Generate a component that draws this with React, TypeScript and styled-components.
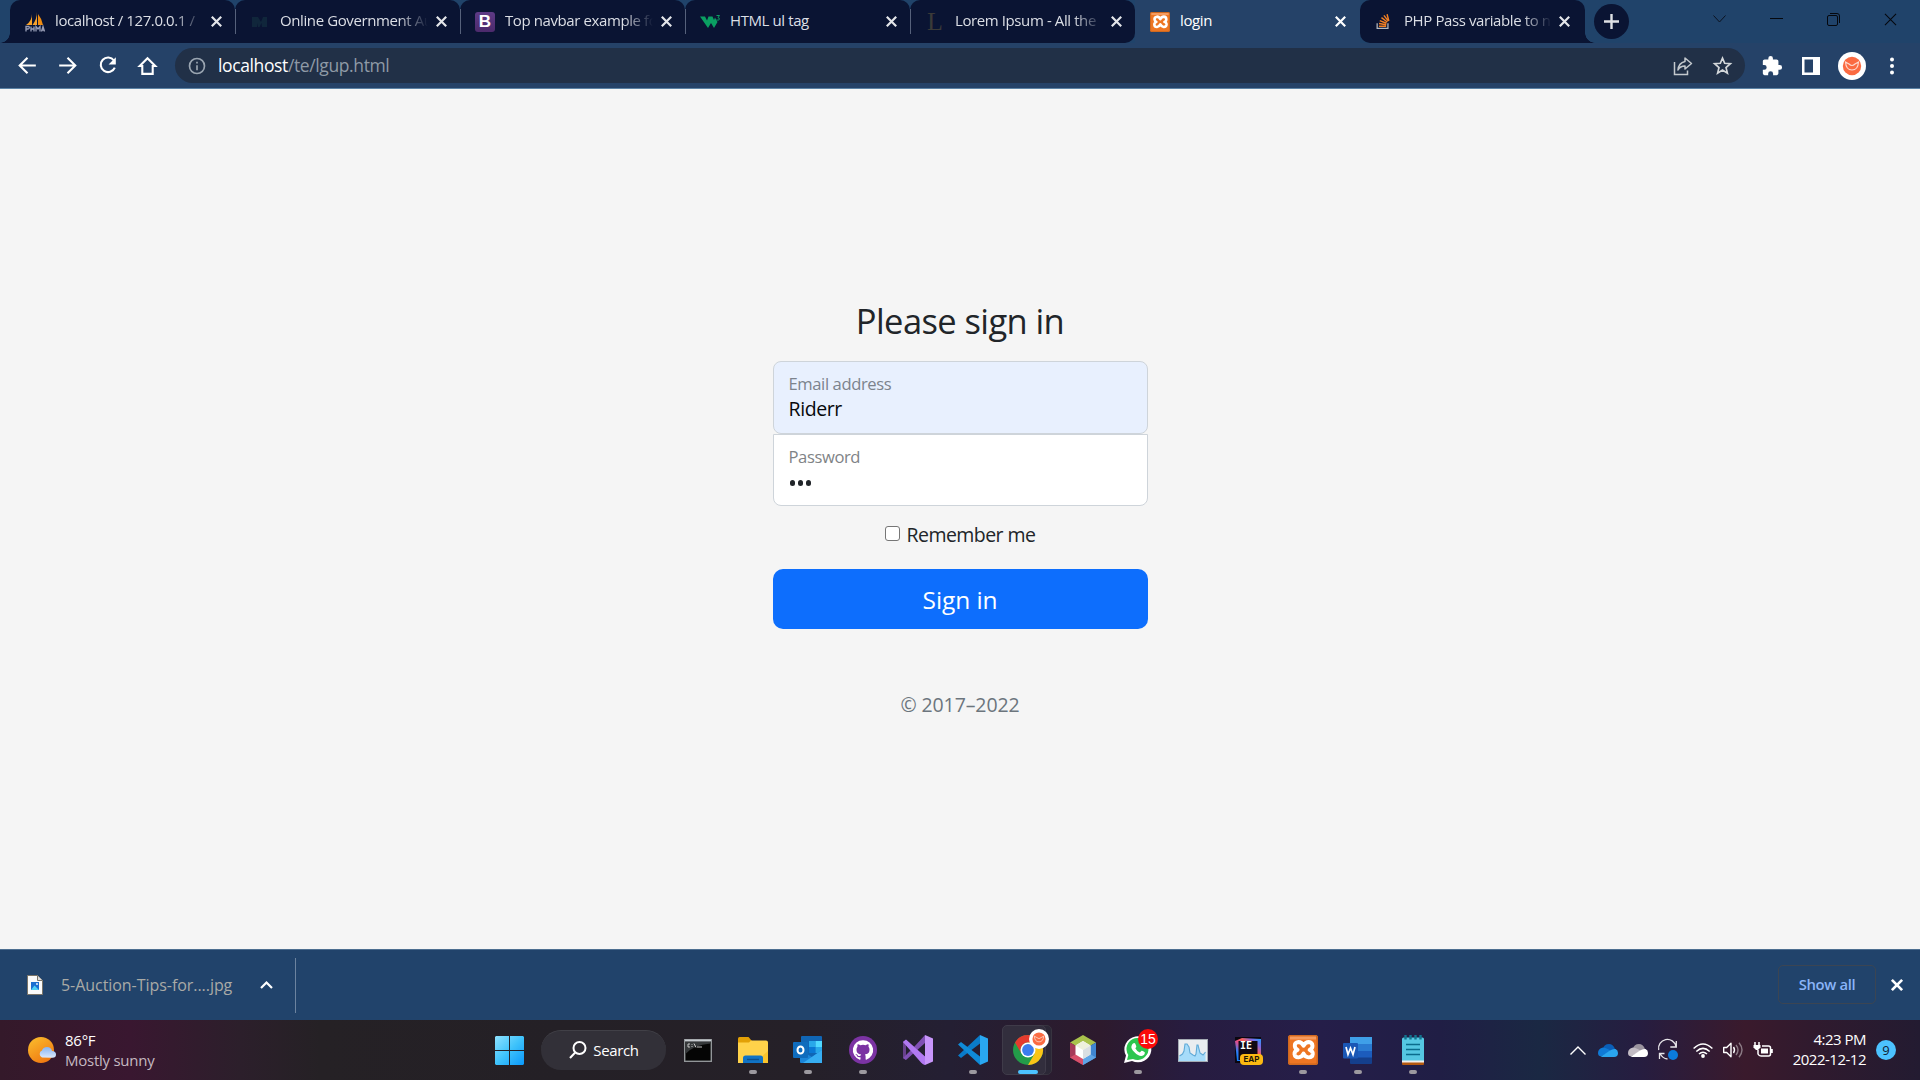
import React from "react";
import styled, { createGlobalStyle } from "styled-components";

const Global = createGlobalStyle`
  * { box-sizing: border-box; }
  html, body { margin: 0; padding: 0; overflow: hidden; }
  body { font-family: "Open Sans", "Noto Sans", sans-serif; }
  svg { display: block; flex: none; overflow: visible; }
`;

/* ---------- window shell ---------- */

const Screen = styled.div`
  width: 1920px;
  height: 1080px;
  display: flex;
  flex-direction: column;
  background: #f5f5f5;
`;

const TabStrip = styled.div`
  height: 43px;
  display: flex;
  align-items: stretch;
  padding: 0 1px 0 10px;
  background: #20436a;
`;

const TabBox = styled.div<{ $active?: boolean; $round?: string; $last?: boolean }>`
  position: relative;
  width: 225px;
  display: flex;
  align-items: center;
  padding: 0 ${(p) => (p.$last ? 15 : p.$active ? 14 : 13)}px 0 ${(p) => (p.$last ? 14 : 15)}px;
  color: ${(p) => (p.$active ? "#ffffff" : "#dcdfe6")};
  background: ${(p) => (p.$active ? "#254268" : "#0a1433")};
  border-radius: ${(p) => p.$round || "10px 10px 0 0"};
`;

const Flare = styled.i<{ $side: "left" | "right" }>`
  position: absolute;
  bottom: 0;
  ${(p) => p.$side}: -10px;
  width: 10px;
  height: 10px;
  background: radial-gradient(
    circle at ${(p) => (p.$side === "left" ? "0 0" : "100% 0")},
    transparent 9.5px,
    #0a1433 10px
  );
`;

const TabDivider = styled.i`
  position: absolute;
  right: -1px;
  top: 9px;
  width: 1px;
  height: 25px;
  background: #56617b;
  z-index: 1;
`;

const FavSlot = styled.span`
  width: 20px;
  height: 20px;
  margin-right: 10px;
  flex: none;
`;

const TabTitle = styled.span<{ $fade?: boolean }>`
  flex: 1 0 0;
  height: 40px;
  line-height: 37px;
  white-space: nowrap;
  font-size: 15px;
  letter-spacing: -0.4px;
  ${(p) => p.$fade && "mask-image: linear-gradient(90deg, #000 118px, transparent 148px);"}
`;

const NewTab = styled.div`
  width: 35px;
  height: 35px;
  margin: 4px 0 0 9px;
  border-radius: 50%;
  background: #0a1433;
  display: flex;
  align-items: center;
  justify-content: center;
`;

const WindowControls = styled.div`
  margin-left: auto;
  height: 38px;
  display: grid;
  grid-template-columns: repeat(4, 57px);
  place-items: center;
`;

const Toolbar = styled.div`
  height: 46px;
  display: flex;
  align-items: flex-start;
  padding: 5px 14px 0 15px;
  background: #254268;
  border-bottom: 1px solid #5b82a5;
`;

const NavButtons = styled.div`
  width: 160px;
  height: 35px;
  display: flex;
  align-items: center;
  gap: 15px;
`;

const Omnibox = styled.div`
  width: 1570px;
  height: 35px;
  border-radius: 18px;
  background: #213047;
  display: flex;
  align-items: center;
  padding: 0 12px 0 12px;
`;

const Address = styled.span`
  flex: 1;
  margin-left: 11px;
  line-height: 34px;
  height: 35px;
  font-size: 17.5px;
  letter-spacing: -0.38px;
  color: #8f9aa6;
  b { font-weight: 400; color: #ffffff; }
`;

const OmniActions = styled.div`
  display: flex;
  gap: 18px;
`;

const ToolActions = styled.div`
  height: 35px;
  display: flex;
  align-items: center;
  padding-left: 16px;
  gap: 18.6px;
`;

/* ---------- sign-in page ---------- */

const Page = styled.main`
  height: 860px;
  display: flex;
  flex-direction: column;
  align-items: center;
  color: #212529;
`;

const Form = styled.form`
  width: 375px;
  margin-top: 211px;
  display: flex;
  flex-direction: column;
  align-items: stretch;
  text-align: center;
`;

const Heading = styled.h1`
  margin: 0 0 19px;
  font-size: 34.5px;
  font-weight: 400;
  line-height: 42px;
  letter-spacing: -0.6px;
`;

const Field = styled.label<{ $filled?: boolean }>`
  display: flex;
  flex-direction: column;
  text-align: left;
  height: ${(p) => (p.$filled ? 73 : 72)}px;
  padding: 10px 16px 0 15px;
  border: 1px solid #ced4da;
  border-radius: ${(p) => (p.$filled ? "8px" : "0 0 8px 8px")};
  background: ${(p) => (p.$filled ? "#e8f0fe" : "#ffffff")};
`;

const FieldName = styled.span<{ $tone: string }>`
  font-size: 16.6px;
  line-height: 24px;
  letter-spacing: -0.4px;
  color: ${(p) => p.$tone};
`;

const FieldValue = styled.span`
  font-size: 19.5px;
  line-height: 26px;
  letter-spacing: -0.4px;
  color: #07090c;
`;

const Dots = styled.span`
  display: flex;
  gap: 2.5px;
  padding: 11px 0 0 1px;
  i { width: 5.5px; height: 5.5px; border-radius: 50%; background: #212529; }
`;

const Remember = styled.label`
  display: flex;
  justify-content: center;
  align-items: flex-start;
  gap: 7px;
  margin-top: 16px;
  height: 47px;
  font-size: 19.5px;
  line-height: 26px;
  letter-spacing: -0.55px;
`;

const Checkbox = styled.i`
  width: 15px;
  height: 15px;
  margin-top: 4px;
  border: 1px solid #767676;
  border-radius: 3px;
  background: #ffffff;
`;

const SignInButton = styled.button`
  height: 60px;
  padding: 1px 0 0;
  border: 0;
  border-radius: 10px;
  background: #0d6efd;
  color: #ffffff;
  font: 400 24.5px/60px "Open Sans", sans-serif;
  letter-spacing: -0.1px;
`;

const Copyright = styled.p`
  margin: 61px 0 0;
  font-size: 19.5px;
  line-height: 30px;
  letter-spacing: -0.1px;
  color: #6c757d;
`;

/* ---------- downloads ---------- */

const DownloadBar = styled.div`
  height: 71px;
  display: flex;
  align-items: center;
  padding: 0 17px 0 27px;
  background: #21436b;
  border-top: 1px solid #4d6e90;
`;

const FileName = styled.span`
  margin-left: 18px;
  width: 199px;
  font-size: 16px;
  line-height: 30px;
  letter-spacing: -0.05px;
  color: #a9aaa6;
`;

const BarDivider = styled.i`
  width: 1px;
  height: 55px;
  margin-left: 22px;
  background: #6c839f;
`;

const ShowAll = styled.div`
  width: 98px;
  height: 39px;
  margin: 0 15px 2px auto;
  border: 1px solid #3b4553;
  border-radius: 5px;
  text-align: center;
  font-size: 14.8px;
  font-weight: 600;
  line-height: 36px;
  letter-spacing: -0.35px;
  color: #8ab4f8;
`;

/* ---------- taskbar ---------- */

const Taskbar = styled.div`
  height: 60px;
  display: flex;
  align-items: center;
  color: #ffffff;
  background: linear-gradient(
    90deg,
    #34192a 0, #391730 130px, #2c1f2b 240px, #252125 320px, #242026 560px, #252028 800px,
    #241f33 950px, #2d1a2d 1100px, #271c40 1190px, #251e49 1320px, #201e45 1440px,
    #1a2843 1540px, #261d40 1640px, #3a1a2c 1745px, #301a2e 1810px, #231b31 1920px
  );
`;

const Weather = styled.div`
  width: 495px;
  padding-left: 28px;
  display: flex;
  align-items: center;
  gap: 9px;
`;

const TwoLines = styled.div<{ $right?: boolean }>`
  display: flex;
  flex-direction: column;
  width: ${(p) => (p.$right ? "93px" : "auto")};
  font-size: 15px;
  line-height: 20px;
  letter-spacing: ${(p) => (p.$right ? -0.5 : -0.25)}px;
  text-align: ${(p) => (p.$right ? "right" : "left")};
  padding-bottom: ${(p) => (p.$right ? 2 : 0)}px;
  em { font-style: normal; color: #c5b9c1; }
`;

const SearchPill = styled.div`
  width: 125px;
  height: 40px;
  margin: 0 4px 0 17px;
  border-radius: 20px;
  border-top: 1px solid #414047;
  background: #323038;
  display: flex;
  align-items: center;
  justify-content: center;
  gap: 6px;
  padding: 0 0 2px 1px;
  font-size: 15px;
  line-height: 36px;
  letter-spacing: -0.35px;
`;

const Slot = styled.div`
  position: relative;
  width: 55px;
  height: 60px;
  display: flex;
  align-items: center;
  justify-content: center;
`;

const Running = styled.i<{ $active?: boolean }>`
  position: absolute;
  left: ${(p) => (p.$active ? 17.5 : 23.5)}px;
  top: 50px;
  width: ${(p) => (p.$active ? 20 : 8)}px;
  height: 4px;
  border-radius: 2px;
  background: ${(p) => (p.$active ? "#4cc2ff" : "#9c999f")};
`;

const ActiveTile = styled.i<{ $back?: boolean }>`
  position: absolute;
  left: ${(p) => (p.$back ? 9 : 2)}px;
  top: 5px;
  width: ${(p) => (p.$back ? 43 : 44)}px;
  height: 50px;
  border-radius: 5px;
  border: 1px solid ${(p) => (p.$back ? "#37333f" : "#3f3b49")};
  background: ${(p) => (p.$back ? "#2b2736" : "#322e3d")};
`;

const Above = styled.span`
  position: relative;
`;

const Badge = styled.b`
  position: absolute;
  left: 28px;
  top: 9px;
  width: 20px;
  height: 20px;
  border-radius: 50%;
  background: #fb0a0a;
  text-align: center;
  font: 400 14px/20px "Liberation Sans", Arial, sans-serif;
`;

const Eap = styled.b`
  position: absolute;
  left: 20px;
  top: 34px;
  width: 23px;
  height: 11px;
  border-radius: 4px;
  background: #fcb912;
  color: #1b1508;
  text-align: center;
  font: 700 8px/11px Inter, sans-serif;
`;

const Ie = styled.b`
  position: absolute;
  left: 18px;
  top: 21px;
  width: 16px;
  font: 700 10px/10px "DejaVu Sans Mono", monospace;
  text-align: center;
`;

const Tray = styled.div`
  margin-left: auto;
  display: flex;
  align-items: center;
  padding-right: 24px;
`;

const TrayIcons = styled.div`
  display: grid;
  grid-template-columns: 28px 30px 30px 35px 30px 30px 20px;
  align-items: center;
  justify-items: start;
`;

const Notice = styled.b`
  width: 20px;
  height: 20px;
  margin-left: 10px;
  border-radius: 50%;
  background: #4cc2ff;
  color: #102030;
  text-align: center;
  font-size: 13px;
  font-weight: 400;
  line-height: 20px;
`;

/* ---------- icons ---------- */

const Cross = ({ size = 11, color = "#e4e6ea", w = 2.2 }: { size?: number; color?: string; w?: number }) => (
  <svg width={size} height={size} viewBox="0 0 11 11" stroke={color} strokeWidth={w}>
    <path d="M.8.8l9.4 9.4M10.2.8L.8 10.2" />
  </svg>
);

const FavPma = () => (
  <svg width="20" height="20" viewBox="0 0 20 20">
    <path d="M7 2Q7 9 1 13h6zM12 0v13H7.500Q12 7 12 0z" fill="#f7a22b" />
    <path d="M13 2q4 5 5 11h-5z" fill="#f08c10" />
    <path d="M1 19.500v-5h3q1 2-1 2.500H1M6 19.500v-5M6 17h3M9 14.500v5M11 19.500v-5l2 2.500 2-2.500v5M16.500 19.500l1.500-5 1.500 5M17 18h2" stroke="#9a9fb8" strokeWidth="1.300" fill="none" />
  </svg>
);

const FavMark = () => (
  <svg width="20" height="20" viewBox="0 0 20 20">
    <path d="M2 5h6l3 5 2-5h4v10h-5l-.5-4-2 4H8l-1-4v4H2z" fill="#10263b" />
  </svg>
);

const FavText = styled.span<{ $kind: "b" | "l" }>`
  display: block;
  width: 20px;
  height: 20px;
  border-radius: 3px;
  text-align: center;
  ${(p) =>
    p.$kind === "b"
      ? `background: linear-gradient(#5e3a86, #4c2a6c); color: #fff; font: 700 17px/20px "Liberation Sans", sans-serif;`
      : `color: #3b3a38; font: 400 26px/20px "Liberation Serif", serif;`}
`;

const FavW3 = () => (
  <svg width="20" height="20" viewBox="0 0 20 20">
    <path d="M0 4.500h5l2 4 1.500-4h4L14 8l1-2.500L17.500 10l-3.500 6-3-5-3 5z" fill="#0a9f62" />
    <path d="M16.500 3.500h3L18 5.600q2 .3 1.200 2-.8 1-2.700.3" strokeWidth="1" fill="none" stroke="#0a9f62" />
  </svg>
);

const Xampp = ({ size }: { size: number }) => (
  <svg width={size} height={size} viewBox="0 0 30 30">
    <rect width="30" height="30" rx="2.500" fill="#ee7623" />
    <rect x=".8" y=".8" width="28.400" height="28.400" rx="2" fill="none" stroke="#c9661f" strokeWidth="1.300" />
    <path d="M2 1.500h26v3H2z" fill="#f9ab78" opacity=".7" />
    <path
      d="M15.500 10.800Q13.800 7 10.500 7Q6.500 7.500 6.800 11Q7 13.800 9.600 14.800Q6.200 16 6.500 19.300Q7 22.600 10.600 22.400Q13.800 22 15.500 18.600Q17.200 22 20.500 22.400Q24.400 22.600 24.800 19Q25 16 21.600 14.800Q24.500 13.800 24.500 10.800Q24.300 7.300 20.700 7Q17.400 7 15.500 10.800z"
      fill="none" stroke="#fff" strokeWidth="3.900" strokeLinejoin="round"
    />
  </svg>
);

const FavStack = () => (
  <svg width="18" height="18" viewBox="0 0 20 20" fill="none">
    <path d="M3.500 12.500v5.700h12v-5.700" stroke="#b5b9bf" strokeWidth="1.400" />
    <path d="M5.500 15.800h8M5.600 12.800l8 1.400M6.400 9.500l7.500 3M8.300 6.200l6.500 4.900M11 3.700l5 6.400M14.500 2.500l2 7.500" stroke="#f48024" strokeWidth="1.600" />
  </svg>
);

const Nav = ({ children }: { children: React.ReactNode }) => (
  <svg width="25" height="25" viewBox="0 0 24 24" fill="none" stroke="#fff" strokeWidth="2">{children}</svg>
);

const Smile = ({ size }: { size: number }) => (
  <svg width={size} height={size} viewBox="0 0 28 28">
    <circle cx="14" cy="14" r="14" fill="#fff" />
    <circle cx="14" cy="14" r="9.200" fill="#fb6b42" />
    <path d="M7.500 10q.5 8 6.500 8t6.500-8l-3.500 2q-3 3-6 0z" fill="none" stroke="#fff" strokeOpacity=".75" strokeWidth="1.100" />
  </svg>
);

const CloudShape = ({ a, b, c }: { a: string; b: string; c: string }) => (
  <svg width="20" height="13" viewBox="0 0 20 13">
    <path d="M5 5Q6 0 11 0q4 0 6 5l-4 4z" fill={a} />
    <path d="M0 9q0-4.500 5-5.500 3 0 8 3.500L3 12.500Q0 12 0 9z" fill={b} />
    <path d="M3 12.500l9-6q3-2 5.500-1.500Q20 6 20 9q0 4-4 4H5q-1.500 0-2-.5z" fill={c} />
  </svg>
);

const StartIcon = () => (
  <svg width="29" height="29" viewBox="0 0 29 29">
    <defs>
      <linearGradient id="win" x1="0" y1="0" x2="1" y2="1">
        <stop offset="0" stopColor="#8fe2ff" /><stop offset=".5" stopColor="#3fc3fb" /><stop offset="1" stopColor="#0a98fb" />
      </linearGradient>
    </defs>
    <path d="M1 0h13v14H0V1zM15 0h13l1 1v13H15zM0 15h14v14H1l-1-1zM15 15h14v13l-1 1H15z" fill="url(#win)" />
  </svg>
);

const CmdIcon = () => (
  <svg width="28" height="23" viewBox="0 0 28 23">
    <rect x=".7" y=".7" width="26.600" height="21.600" fill="#050505" stroke="#929699" strokeWidth="1.400" />
    <path d="M1.400 1.400h25.200v3Q9 6 1.400 15z" fill="#35383a" />
    <path d="M1 1.500h26" stroke="#c6cbd0" strokeWidth="1.800" />
    <path d="M6 5H4v3h2M8 5v.8M8 7v1M10 4.500l2 4M13 8h5" stroke="#d6d6d6" strokeWidth=".9" fill="none" />
  </svg>
);

const FolderIcon = () => (
  <svg width="30" height="27" viewBox="0 0 30 27">
    <path d="M0 1.500Q0 0 1.500 0h9l3 3.500V8H0z" fill="#e2a006" />
    <path d="M13 3.500h15q2 0 2 2V26H0V5.500h11z" fill="#ffd24a" />
    <path d="M30 14v12H16z" fill="#f9bd1e" opacity=".7" />
    <path d="M5 26v-5q0-2.500 2.500-2.500h15q2.500 0 2.500 2.500v5z" fill="#1173c5" />
    <path d="M9 22.500h12" stroke="#0c4f8e" strokeWidth="1.400" />
  </svg>
);

const OutlookIcon = () => (
  <svg width="30" height="28" viewBox="0 0 30 28">
    <rect x="8" y="0" width="21" height="22" rx="1" fill="#1066b5" />
    <path d="M16 5h6.500v6H16z" fill="#28a8ea" /><path d="M22.500 5H29v6h-6.500z" fill="#50d9ff" />
    <path d="M16 11h6.500v6H16z" fill="#0a78d4" /><path d="M22.500 11H29v6h-6.500z" fill="#28a8ea" />
    <path d="M7 14l12 7 10-7v12q0 1-1 1H8q-1 0-1-1z" fill="#1a85d8" />
    <path d="M29 14v13H10z" fill="#37aef2" />
    <rect x="0" y="6" width="15" height="16" rx="1" fill="#0f6cbd" />
    <ellipse cx="7.500" cy="14" rx="3" ry="3.600" fill="none" stroke="#fff" strokeWidth="2" />
  </svg>
);

const GithubIcon = () => (
  <svg width="28" height="28" viewBox="0 0 28 28">
    <circle cx="14" cy="14" r="14" fill="#7b33a3" />
    <path
      d="M14 4.200a10 10 0 0 0-3.300 19.500c.5.100.8-.2.800-.5v-2c-2.800.6-3.500-1.200-3.500-1.200-.5-1.200-1.200-1.500-1.200-1.500-.9-.6.1-.6.1-.6 1 .1 1.600 1 1.600 1 .9 1.600 2.400 1.100 3 .9.1-.7.400-1.100.7-1.300-2.300-.3-4.700-1.100-4.700-5 0-1.100.4-2 1-2.700 0-.8-.2-1.700.1-2.600 0 0 .9-.3 2.800 1a9.500 9.500 0 0 1 5.200 0c1.900-1.300 2.800-1 2.800-1 .4 1 .2 1.800.1 2.600.7.700 1 1.600 1 2.700 0 3.900-2.300 4.700-4.600 5 .4.300.7.900.7 1.900v2.800c0 .3.200.6.700.5A10 10 0 0 0 14 4.200z"
      fill="#fff"
    />
  </svg>
);

const VisualStudioIcon = () => (
  <svg width="30" height="30" viewBox="0 0 30 30">
    <path d="M0 7l3-2v20l-3-2z" fill="#68418c" />
    <path d="M3 5L22 22v8L0 7zM0 23l3 2L22 8V0L11 12z" fill="#8050b5" />
    <path d="M0 7l3-2.500 19 17V30q-2-.5-4-2.500z" fill="#b179f1" />
    <path d="M22 0l8 3.500v23L22 30z" fill="#c896fb" />
  </svg>
);

const CodeIcon = () => (
  <svg width="30" height="30" viewBox="0 0 30 30">
    <path d="M0 20.500L22 0v8.500L3 23z" fill="#0a7bc9" />
    <path d="M0 9.500L3 7l19 14.500V30z" fill="#0f8bd8" />
    <path d="M22 0l8 3.500v23L22 30z" fill="#29a8f2" />
  </svg>
);

const ChromeIcon = () => (
  <svg width="30" height="30" viewBox="0 0 30 30">
    <circle cx="15" cy="15" r="15" fill="#239c49" />
    <path d="M15 7.500h13A15 15 0 0 1 15 30l6.500-11.200z" fill="#fbc517" />
    <path d="M2 7.500A15 15 0 0 1 28 7.500H15a7.500 7.500 0 0 0-6.500 11.200z" fill="#e43b2e" />
    <circle cx="15" cy="15" r="7.500" fill="#fff" /><circle cx="15" cy="15" r="5.900" fill="#3b7ded" />
  </svg>
);

const ChromeBadge = styled.span`
  position: absolute;
  left: 28.500px;
  top: 9px;
`;

const CubeIcon = () => (
  <svg width="26" height="30" viewBox="0 0 26 30">
    <path d="M13 0l13 7.500L13 15 0 7.500z" fill="#a9c24c" />
    <path d="M0 7.500L13 15v15L0 22.500z" fill="#a63a58" /><path d="M26 7.500L13 15v15l13-7.500z" fill="#3f86d2" />
    <path d="M0 22.500L13 15v15z" fill="#d84f6a" /><path d="M26 22.500L13 15v15z" fill="#5fa5e6" />
    <path d="M13 6l7.500 4.500v9L13 24l-7.500-4.500v-9z" fill="#fff" />
    <path d="M13 6l7.500 4.500L13 15l-7.500-4.500z" fill="#eef0dc" /><path d="M13 15l7.500-4.500v9L13 24z" fill="#dadfe2" />
  </svg>
);

const WhatsappIcon = () => (
  <svg width="28" height="28" viewBox="0 0 28 28">
    <path d="M0 27l2-7.500A13.500 13 0 1 1 8 25z" fill="#fff" />
    <path d="M3 24l1.300-5A11 11 0 1 1 9 23z" fill="#2cc64f" />
    <path d="M9 7.500q1.500-1 2.300.3l1 2.500q.2.800-1 2 1.500 3 4.500 4.300l1.500-1.700q.8-.3 3.500 1.400.4 3-3.300 3.700-3 .3-7-3.700T7.500 10q.5-2 1.500-2.500z" fill="#fff" />
  </svg>
);

const MonitorIcon = () => (
  <svg width="30" height="23" viewBox="0 0 30 23">
    <rect x=".5" y=".5" width="29" height="22" fill="#e9edf0" stroke="#a4abb3" />
    <path d="M1.500 17l3-2 1.500-3 1-7h2l2 3 1 6 3 2 2 1 1-2 1-9h1l2 8 3 2 2.500-3v9h-27z" fill="#a6dcfa" />
    <path d="M1.500 17l3-2 1.500-3 1-7h2l2 3 1 6 3 2 2 1 1-2 1-9h1l2 8 3 2 2.500-3" fill="none" stroke="#5fa9d6" strokeWidth="1.100" />
  </svg>
);

const IdeaIcon = () => (
  <svg width="26" height="26" viewBox="0 0 26 26">
    <defs>
      <linearGradient id="idea" x1="0" y1="1" x2="1" y2="0">
        <stop offset="0" stopColor="#087cfa" /><stop offset=".25" stopColor="#2f7df5" /><stop offset=".45" stopColor="#e04f90" />
        <stop offset=".6" stopColor="#fe5f55" /><stop offset=".8" stopColor="#7a6ae8" /><stop offset="1" stopColor="#18a5ff" />
      </linearGradient>
    </defs>
    <path d="M0 0h26v26H0z" fill="#0a0710" />
    <path d="M0 4l7-3 19 1v22H2z" fill="url(#idea)" />
    <rect x="3.500" y="4" width="19" height="19" fill="#100914" />
  </svg>
);

const WordIcon = () => (
  <svg width="30" height="27" viewBox="0 0 30 27">
    <path d="M7 0h22v7H7z" fill="#3f9fe8" /><path d="M7 7h22v7H7z" fill="#2a7ad1" />
    <path d="M7 14h22v7H7z" fill="#1c5cbd" /><path d="M7 20.500h22V26q0 1-1 1H8q-1 0-1-1z" fill="#143f8c" />
    <rect x="0" y="6" width="15" height="15.500" rx="1" fill="#1a57b5" />
    <path d="M3 10l2 7.500L7.500 11 10 17.500l2-7.500" fill="none" stroke="#fff" strokeWidth="1.700" />
  </svg>
);

const NotepadIcon = () => (
  <svg width="22" height="30" viewBox="0 0 22 30">
    <path d="M0 25h22v4q0 1-1 1H1q-1 0-1-1z" fill="#b4590f" />
    <path d="M0 25h22v2.500H0z" fill="#f0f0ee" />
    <path d="M0 4q0-1.500 1.500-1.500h19Q22 2.500 22 4v21.500H0z" fill="#55c7e2" />
    <path d="M4 9.500h14M4 14.500h14M4 19.500h14" stroke="#0b6c8c" strokeWidth="1.700" />
    <path d="M3.500 0v4.500M8.500 0v4.500M13.500 0v4.500M18.500 0v4.500" stroke="#127590" strokeWidth="2.400" />
  </svg>
);

/* ---------- data ---------- */

type TabInfo = { title: string; icon: React.ReactNode; fade?: boolean; active?: boolean; round?: string; divider?: boolean };

const tabs: TabInfo[] = [
  { title: "localhost / 127.0.0.1 /", icon: <FavPma />, fade: true, divider: true },
  { title: "Online Government Au", icon: <FavMark />, fade: true, divider: true },
  { title: "Top navbar example fo", icon: <FavText $kind="b">B</FavText>, fade: true, divider: true },
  { title: "HTML ul tag", icon: <FavW3 />, divider: true },
  { title: "Lorem Ipsum - All the", icon: <FavText $kind="l">L</FavText>, fade: true, round: "10px 10px 10px 0" },
  { title: "login", icon: <Xampp size={20} />, active: true, round: "0" },
  { title: "PHP Pass variable to n", icon: <FavStack />, fade: true, round: "10px 10px 0 10px" },
];

const apps: { icon: React.ReactNode; running?: boolean; active?: boolean; extra?: React.ReactNode }[] = [
  { icon: <CmdIcon /> },
  { icon: <FolderIcon />, running: true },
  { icon: <OutlookIcon />, running: true },
  { icon: <GithubIcon />, running: true },
  { icon: <VisualStudioIcon /> },
  { icon: <CodeIcon />, running: true },
  { icon: <ChromeIcon />, running: true, active: true, extra: <ChromeBadge><Smile size={20} /></ChromeBadge> },
  { icon: <CubeIcon /> },
  { icon: <WhatsappIcon />, running: true, extra: <Badge>15</Badge> },
  { icon: <MonitorIcon /> },
  { icon: <IdeaIcon />, extra: <><Ie>IE</Ie><Eap>EAP</Eap></> },
  { icon: <Xampp size={30} />, running: true },
  { icon: <WordIcon />, running: true },
  { icon: <NotepadIcon />, running: true },
];

export default function App() {
  return (
    <Screen>
      <Global />
      <TabStrip>
        {tabs.map((t, i) => (
          <TabBox key={t.title} $active={t.active} $round={t.round} $last={i === tabs.length - 1}>
            {i === 0 && <Flare $side="left" />}
            {i === tabs.length - 1 && <Flare $side="right" />}
            <FavSlot>{t.icon}</FavSlot>
            <TabTitle $fade={t.fade}>{t.title}</TabTitle>
            <Cross color={t.active ? "#fff" : undefined} />
            {t.divider && <TabDivider />}
          </TabBox>
        ))}
        <NewTab>
          <svg width="15" height="15" viewBox="0 0 15 15" stroke="#dfe1e5" strokeWidth="2.400"><path d="M7.500 0v15M0 7.500h15" /></svg>
        </NewTab>
        <WindowControls>
          <svg width="13" height="8" viewBox="0 0 13 8" fill="none" stroke="#0b1220"><path d="M.5.500l6 6.500 6-6.500" /></svg>
          <svg width="13" height="2" viewBox="0 0 13 2"><path d="M0 0h13v1H0z" fill="#05080e" /></svg>
          <svg width="13" height="13" viewBox="0 0 13 13" fill="none" stroke="#05080e"><rect x=".5" y="2.500" width="10" height="10" rx="1.500" /><path d="M3 .5h7q2.500 0 2.500 2.500v7" /></svg>
          <Cross size={13} color="#05080e" w={0.9} />
        </WindowControls>
      </TabStrip>

      <Toolbar>
        <NavButtons>
          <Nav><path d="M20 12H5M12 4.500L4.500 12l7.500 7.500" /></Nav>
          <Nav><path d="M4 12h15M12 4.500l7.500 7.500-7.500 7.500" /></Nav>
          <Nav><path d="M18.200 7.200A7 7 0 1 0 19 14" /><path d="M20 4v7h-7z" fill="#fff" stroke="none" /></Nav>
          <Nav><path d="M7 20v-7.500H4.500L12 5l7.500 7.500H17V20z" /></Nav>
        </NavButtons>
        <Omnibox>
          <svg width="20" height="20" viewBox="0 0 24 24" fill="none" stroke="#9aa5b1" strokeWidth="2"><circle cx="12" cy="12" r="9" /><path d="M12 11v6M12 7v2" /></svg>
          <Address><b>localhost</b>/te/lgup.html</Address>
          <OmniActions>
            <svg width="22" height="22" viewBox="0 0 22 22" fill="none" stroke="#c3c8cd" strokeWidth="1.500">
              <path d="M2.500 7v12.500h13v-4" /><path d="M13 3l6.500 5.500L13 14v-3q-5 0-7 4 .5-7 7-8.500z" strokeLinejoin="round" />
            </svg>
            <svg width="21" height="21" viewBox="0 0 24 24" fill="none" stroke="#d3d7da" strokeWidth="1.900"><path d="M12 3.500l2.500 6 6.500.5-5 4.300 1.600 6.400L12 17.200l-5.600 3.500L8 14.300 3 10l6.500-.5z" /></svg>
          </OmniActions>
        </Omnibox>
        <ToolActions>
          <svg width="22" height="22" viewBox="0 0 24 24" fill="#fff"><path d="M20.500 11H19V7c0-1.100-.9-2-2-2h-4V3.500a2.500 2.500 0 0 0-5 0V5H4c-1.100 0-2 .9-2 2v3.800h1.500a2.700 2.700 0 0 1 0 5.400H2V20c0 1.100.9 2 2 2h3.800v-1.500a2.700 2.700 0 0 1 5.400 0V22H17c1.100 0 2-.9 2-2v-4h1.500a2.500 2.500 0 0 0 0-5z" /></svg>
          <svg width="18" height="18" viewBox="0 0 18 18"><path d="M0 0h18v18H0z" fill="#fff" /><path d="M2.500 2.500H11v13H2.500z" fill="#254268" /></svg>
          <Smile size={28} />
          <svg width="18" height="18" viewBox="0 0 18 18" fill="#fff"><circle cx="7" cy="2.500" r="2" /><circle cx="7" cy="9" r="2" /><circle cx="7" cy="15.500" r="2" /></svg>
        </ToolActions>
      </Toolbar>

      <Page>
        <Form onSubmit={(e) => e.preventDefault()}>
          <Heading>Please sign in</Heading>
          <Field $filled>
            <FieldName $tone="#7c838d">Email address</FieldName>
            <FieldValue>Riderr</FieldValue>
          </Field>
          <Field>
            <FieldName $tone="#808386">Password</FieldName>
            <Dots><i /><i /><i /></Dots>
          </Field>
          <Remember><Checkbox />Remember me</Remember>
          <SignInButton>Sign in</SignInButton>
          <Copyright>© 2017–2022</Copyright>
        </Form>
      </Page>

      <DownloadBar>
        <svg width="16" height="20" viewBox="0 0 16 20">
          <path d="M.5.500h10l5 5v14H.5z" fill="#fafafa" stroke="#7a7468" /><path d="M10.500.5v5h5" fill="#dcdcdc" stroke="#7a7468" />
          <rect x="4" y="7" width="8" height="8" fill="#1c6fd0" /><path d="M4 15l3.500-4.500L12 15z" fill="#4fd0f5" /><circle cx="10" cy="9" r=".9" fill="#fff" />
        </svg>
        <FileName>5-Auction-Tips-for....jpg</FileName>
        <svg width="13" height="8" viewBox="0 0 13 8" fill="none" stroke="#fff" strokeWidth="2.200"><path d="M1 7l5.500-5.500L12 7" /></svg>
        <BarDivider />
        <ShowAll>Show all</ShowAll>
        <Cross color="#fff" w={2.5} size={12} />
      </DownloadBar>

      <Taskbar>
        <Weather>
          <svg width="28" height="26" viewBox="0 0 28 26">
            <defs>
              <linearGradient id="sun" x1="0" y1="0" x2=".6" y2="1"><stop offset="0" stopColor="#fbc02e" /><stop offset="1" stopColor="#f07a12" /></linearGradient>
              <linearGradient id="cl" x1="0" y1="0" x2="0" y2="1"><stop offset="0" stopColor="#86b4f2" /><stop offset="1" stopColor="#dce9fb" /></linearGradient>
            </defs>
            <circle cx="13" cy="13" r="13" fill="url(#sun)" />
            <path d="M14 20.500a3.800 3.800 0 0 1 0-7q1-3.500 5-3.500t5 4q4 0 4 3.500t-4 3.300z" fill="url(#cl)" />
          </svg>
          <TwoLines><span>86°F</span><em>Mostly sunny</em></TwoLines>
        </Weather>
        <StartIcon />
        <SearchPill>
          <svg width="18" height="18" viewBox="0 0 18 18" fill="none" stroke="#fff" strokeWidth="2"><circle cx="10.500" cy="7" r="6" /><path d="M6.200 11.500L1 17" /></svg>
          Search
        </SearchPill>
        {apps.map((a, i) => (
          <Slot key={i}>
            {a.active && <><ActiveTile $back /><ActiveTile /></>}
            <Above>{a.icon}</Above>
            {a.extra}
            {a.running && <Running $active={a.active} />}
          </Slot>
        ))}
        <Tray>
          <TrayIcons>
            <svg width="16" height="9" viewBox="0 0 16 9" fill="none" stroke="#fff" strokeWidth="1.400"><path d="M.5 8.500L8 1l7.500 7.500" /></svg>
            <CloudShape a="#0a5fb8" b="#0f7ad6" c="#2aa5ee" />
            <CloudShape a="#9b959f" b="#c2bcc4" c="#ffffff" />
            <svg width="20" height="20" viewBox="0 0 20 20" fill="none" stroke="#e8e6ea" strokeWidth="1.300">
              <path d="M.7 10A8.800 8.800 0 0 1 18 6.500M18.300 1v6h-6M2 13.500q2.500 5 7.500 5.500M1.500 19v-5.500h5" /><circle cx="15" cy="15" r="5" fill="#0b7bdc" stroke="none" />
            </svg>
            <svg width="20" height="15" viewBox="0 0 20 15" fill="none" stroke="#fff" strokeWidth="1.500">
              <path d="M.6 5.500q9.400-9 18.800 0M3.300 8.500q6.700-6.300 13.400 0M6 11q4-3.600 8 0" /><circle cx="10" cy="13" r="1.900" fill="#fff" stroke="none" />
            </svg>
            <svg width="20" height="16" viewBox="0 0 20 16" fill="none" stroke="#fff" strokeWidth="1.400">
              <path d="M.7 5.500h3L8 1.200v13.600l-4.300-4.300h-3z" strokeLinejoin="round" /><path d="M10.500 5q2 3 0 6" /><path d="M13 3q4 5 0 10M16 .8q6 7.200 0 14.400" stroke="#8b7a84" />
            </svg>
            <svg width="20" height="17" viewBox="0 0 20 17" fill="none" stroke="#fff" strokeWidth="1.500">
              <path d="M9 4h6.500q2 0 2 2v6q0 2-2 2H8q-2 0-3-2V8" /><path d="M18.800 7v4" strokeWidth="2" /><path d="M8 6.500h7v5H8z" fill="#fff" stroke="none" />
              <path d="M2 0v3M6 0v3" /><path d="M.5 3h7v2.500L5 8H3L.5 5.500z" fill="#fff" stroke="none" />
            </svg>
          </TrayIcons>
          <TwoLines $right><span>4:23 PM</span><span>2022-12-12</span></TwoLines>
          <Notice>9</Notice>
        </Tray>
      </Taskbar>
    </Screen>
  );
}
